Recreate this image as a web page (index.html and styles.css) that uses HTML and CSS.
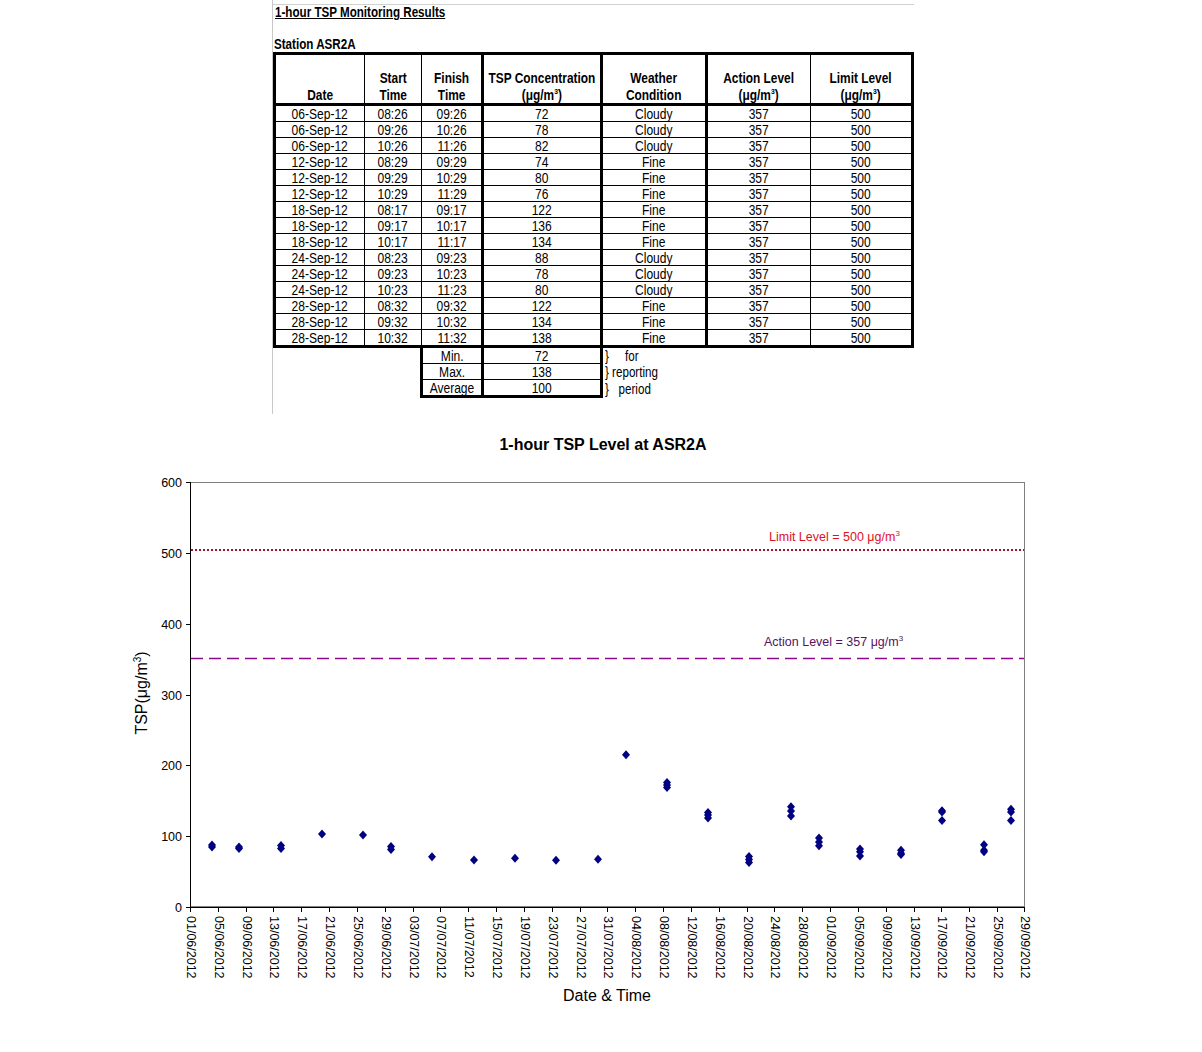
FILE: index.html
```html
<!DOCTYPE html>
<html>
<head>
<meta charset="utf-8">
<link rel="stylesheet" href="styles.css">
</head>
<body>
<div class="sheet">
  <div class="rule"></div>
  <div class="title"><span class="nw">1-hour TSP Monitoring Results</span></div>
  <div class="station"><span class="nw">Station ASR2A</span></div>
  <table class="results">
    <colgroup>
      <col class="c-date"><col class="c-start"><col class="c-finish"><col class="c-tsp"><col class="c-weather"><col class="c-action"><col class="c-limit">
    </colgroup>
    <thead>
      <tr>
        <th><span class="n">Date</span></th>
        <th><span class="n">Start<br>Time</span></th>
        <th><span class="n">Finish<br>Time</span></th>
        <th><span class="n">TSP Concentration<br>(μg/m<sup>3</sup>)</span></th>
        <th><span class="n">Weather<br>Condition</span></th>
        <th><span class="n">Action Level<br>(μg/m<sup>3</sup>)</span></th>
        <th><span class="n">Limit Level<br>(μg/m<sup>3</sup>)</span></th>
      </tr>
    </thead>
    <tbody class="data">
      <tr><td><span class="n">06-Sep-12</span></td><td><span class="n">08:26</span></td><td><span class="n">09:26</span></td><td><span class="n">72</span></td><td><span class="n">Cloudy</span></td><td><span class="n">357</span></td><td><span class="n">500</span></td></tr>
      <tr><td><span class="n">06-Sep-12</span></td><td><span class="n">09:26</span></td><td><span class="n">10:26</span></td><td><span class="n">78</span></td><td><span class="n">Cloudy</span></td><td><span class="n">357</span></td><td><span class="n">500</span></td></tr>
      <tr><td><span class="n">06-Sep-12</span></td><td><span class="n">10:26</span></td><td><span class="n">11:26</span></td><td><span class="n">82</span></td><td><span class="n">Cloudy</span></td><td><span class="n">357</span></td><td><span class="n">500</span></td></tr>
      <tr><td><span class="n">12-Sep-12</span></td><td><span class="n">08:29</span></td><td><span class="n">09:29</span></td><td><span class="n">74</span></td><td><span class="n">Fine</span></td><td><span class="n">357</span></td><td><span class="n">500</span></td></tr>
      <tr><td><span class="n">12-Sep-12</span></td><td><span class="n">09:29</span></td><td><span class="n">10:29</span></td><td><span class="n">80</span></td><td><span class="n">Fine</span></td><td><span class="n">357</span></td><td><span class="n">500</span></td></tr>
      <tr><td><span class="n">12-Sep-12</span></td><td><span class="n">10:29</span></td><td><span class="n">11:29</span></td><td><span class="n">76</span></td><td><span class="n">Fine</span></td><td><span class="n">357</span></td><td><span class="n">500</span></td></tr>
      <tr><td><span class="n">18-Sep-12</span></td><td><span class="n">08:17</span></td><td><span class="n">09:17</span></td><td><span class="n">122</span></td><td><span class="n">Fine</span></td><td><span class="n">357</span></td><td><span class="n">500</span></td></tr>
      <tr><td><span class="n">18-Sep-12</span></td><td><span class="n">09:17</span></td><td><span class="n">10:17</span></td><td><span class="n">136</span></td><td><span class="n">Fine</span></td><td><span class="n">357</span></td><td><span class="n">500</span></td></tr>
      <tr><td><span class="n">18-Sep-12</span></td><td><span class="n">10:17</span></td><td><span class="n">11:17</span></td><td><span class="n">134</span></td><td><span class="n">Fine</span></td><td><span class="n">357</span></td><td><span class="n">500</span></td></tr>
      <tr><td><span class="n">24-Sep-12</span></td><td><span class="n">08:23</span></td><td><span class="n">09:23</span></td><td><span class="n">88</span></td><td><span class="n">Cloudy</span></td><td><span class="n">357</span></td><td><span class="n">500</span></td></tr>
      <tr><td><span class="n">24-Sep-12</span></td><td><span class="n">09:23</span></td><td><span class="n">10:23</span></td><td><span class="n">78</span></td><td><span class="n">Cloudy</span></td><td><span class="n">357</span></td><td><span class="n">500</span></td></tr>
      <tr><td><span class="n">24-Sep-12</span></td><td><span class="n">10:23</span></td><td><span class="n">11:23</span></td><td><span class="n">80</span></td><td><span class="n">Cloudy</span></td><td><span class="n">357</span></td><td><span class="n">500</span></td></tr>
      <tr><td><span class="n">28-Sep-12</span></td><td><span class="n">08:32</span></td><td><span class="n">09:32</span></td><td><span class="n">122</span></td><td><span class="n">Fine</span></td><td><span class="n">357</span></td><td><span class="n">500</span></td></tr>
      <tr><td><span class="n">28-Sep-12</span></td><td><span class="n">09:32</span></td><td><span class="n">10:32</span></td><td><span class="n">134</span></td><td><span class="n">Fine</span></td><td><span class="n">357</span></td><td><span class="n">500</span></td></tr>
      <tr class="last"><td><span class="n">28-Sep-12</span></td><td><span class="n">10:32</span></td><td><span class="n">11:32</span></td><td><span class="n">138</span></td><td><span class="n">Fine</span></td><td><span class="n">357</span></td><td><span class="n">500</span></td></tr>
    </tbody>
    <tbody class="summary">
      <tr><td class="blank" colspan="2"></td><td class="label"><span class="n">Min.</span></td><td class="value"><span class="n">72</span></td><td class="note" colspan="3"><span class="nw">}     for</span></td></tr>
      <tr><td class="blank" colspan="2"></td><td class="label"><span class="n">Max.</span></td><td class="value"><span class="n">138</span></td><td class="note" colspan="3"><span class="nw">} reporting</span></td></tr>
      <tr class="end"><td class="blank" colspan="2"></td><td class="label"><span class="n">Average</span></td><td class="value"><span class="n">100</span></td><td class="note" colspan="3"><span class="nw">}   period</span></td></tr>
    </tbody>
  </table>
</div>
<svg class="chart" width="1202" height="638" viewBox="0 414 1202 638" xmlns="http://www.w3.org/2000/svg">
  <text class="chart-title" x="603" y="450" text-anchor="middle">1-hour TSP Level at ASR2A</text>
  <rect x="190.5" y="482.5" width="834" height="424" fill="none" stroke="#808080" stroke-width="1"/>
  <g class="axis" stroke="#000" stroke-width="1">
    <line x1="190.5" y1="482" x2="190.5" y2="907.5"/>
    <line x1="190" y1="907.5" x2="1025" y2="907.5"/>
    <line x1="186" y1="482.5" x2="190" y2="482.5"/>
    <line x1="186" y1="553.5" x2="190" y2="553.5"/>
    <line x1="186" y1="624.5" x2="190" y2="624.5"/>
    <line x1="186" y1="695.5" x2="190" y2="695.5"/>
    <line x1="186" y1="765.5" x2="190" y2="765.5"/>
    <line x1="186" y1="836.5" x2="190" y2="836.5"/>
    <line x1="186" y1="907.5" x2="190" y2="907.5"/>
  </g>
  <g class="ylabels" text-anchor="end">
    <text x="182" y="487">600</text>
    <text x="182" y="558">500</text>
    <text x="182" y="629">400</text>
    <text x="182" y="700">300</text>
    <text x="182" y="770">200</text>
    <text x="182" y="841">100</text>
    <text x="182" y="912">0</text>
  </g>
  <g class="xticks" stroke="#000" stroke-width="1">
    <line x1="190.5" y1="907" x2="190.5" y2="912"/>
    <line x1="218.5" y1="907" x2="218.5" y2="912"/>
    <line x1="246.5" y1="907" x2="246.5" y2="912"/>
    <line x1="273.5" y1="907" x2="273.5" y2="912"/>
    <line x1="301.5" y1="907" x2="301.5" y2="912"/>
    <line x1="329.5" y1="907" x2="329.5" y2="912"/>
    <line x1="357.5" y1="907" x2="357.5" y2="912"/>
    <line x1="385.5" y1="907" x2="385.5" y2="912"/>
    <line x1="413.5" y1="907" x2="413.5" y2="912"/>
    <line x1="440.5" y1="907" x2="440.5" y2="912"/>
    <line x1="468.5" y1="907" x2="468.5" y2="912"/>
    <line x1="496.5" y1="907" x2="496.5" y2="912"/>
    <line x1="524.5" y1="907" x2="524.5" y2="912"/>
    <line x1="552.5" y1="907" x2="552.5" y2="912"/>
    <line x1="580.5" y1="907" x2="580.5" y2="912"/>
    <line x1="607.5" y1="907" x2="607.5" y2="912"/>
    <line x1="635.5" y1="907" x2="635.5" y2="912"/>
    <line x1="663.5" y1="907" x2="663.5" y2="912"/>
    <line x1="691.5" y1="907" x2="691.5" y2="912"/>
    <line x1="719.5" y1="907" x2="719.5" y2="912"/>
    <line x1="747.5" y1="907" x2="747.5" y2="912"/>
    <line x1="774.5" y1="907" x2="774.5" y2="912"/>
    <line x1="802.5" y1="907" x2="802.5" y2="912"/>
    <line x1="830.5" y1="907" x2="830.5" y2="912"/>
    <line x1="858.5" y1="907" x2="858.5" y2="912"/>
    <line x1="886.5" y1="907" x2="886.5" y2="912"/>
    <line x1="914.5" y1="907" x2="914.5" y2="912"/>
    <line x1="941.5" y1="907" x2="941.5" y2="912"/>
    <line x1="969.5" y1="907" x2="969.5" y2="912"/>
    <line x1="997.5" y1="907" x2="997.5" y2="912"/>
    <line x1="1024.5" y1="907" x2="1024.5" y2="912"/>
  </g>
  <g class="xlabels">
    <text transform="translate(191,916) rotate(90)" dy="0.36em">01/06/2012</text>
    <text transform="translate(219,916) rotate(90)" dy="0.36em">05/06/2012</text>
    <text transform="translate(247,916) rotate(90)" dy="0.36em">09/06/2012</text>
    <text transform="translate(274,916) rotate(90)" dy="0.36em">13/06/2012</text>
    <text transform="translate(302,916) rotate(90)" dy="0.36em">17/06/2012</text>
    <text transform="translate(330,916) rotate(90)" dy="0.36em">21/06/2012</text>
    <text transform="translate(358,916) rotate(90)" dy="0.36em">25/06/2012</text>
    <text transform="translate(386,916) rotate(90)" dy="0.36em">29/06/2012</text>
    <text transform="translate(414,916) rotate(90)" dy="0.36em">03/07/2012</text>
    <text transform="translate(441,916) rotate(90)" dy="0.36em">07/07/2012</text>
    <text transform="translate(469,916) rotate(90)" dy="0.36em">11/07/2012</text>
    <text transform="translate(497,916) rotate(90)" dy="0.36em">15/07/2012</text>
    <text transform="translate(525,916) rotate(90)" dy="0.36em">19/07/2012</text>
    <text transform="translate(553,916) rotate(90)" dy="0.36em">23/07/2012</text>
    <text transform="translate(581,916) rotate(90)" dy="0.36em">27/07/2012</text>
    <text transform="translate(608,916) rotate(90)" dy="0.36em">31/07/2012</text>
    <text transform="translate(636,916) rotate(90)" dy="0.36em">04/08/2012</text>
    <text transform="translate(664,916) rotate(90)" dy="0.36em">08/08/2012</text>
    <text transform="translate(692,916) rotate(90)" dy="0.36em">12/08/2012</text>
    <text transform="translate(720,916) rotate(90)" dy="0.36em">16/08/2012</text>
    <text transform="translate(748,916) rotate(90)" dy="0.36em">20/08/2012</text>
    <text transform="translate(775,916) rotate(90)" dy="0.36em">24/08/2012</text>
    <text transform="translate(803,916) rotate(90)" dy="0.36em">28/08/2012</text>
    <text transform="translate(831,916) rotate(90)" dy="0.36em">01/09/2012</text>
    <text transform="translate(859,916) rotate(90)" dy="0.36em">05/09/2012</text>
    <text transform="translate(887,916) rotate(90)" dy="0.36em">09/09/2012</text>
    <text transform="translate(915,916) rotate(90)" dy="0.36em">13/09/2012</text>
    <text transform="translate(942,916) rotate(90)" dy="0.36em">17/09/2012</text>
    <text transform="translate(970,916) rotate(90)" dy="0.36em">21/09/2012</text>
    <text transform="translate(998,916) rotate(90)" dy="0.36em">25/09/2012</text>
    <text transform="translate(1025,916) rotate(90)" dy="0.36em">29/09/2012</text>
  </g>
  <line x1="191" y1="550" x2="1024" y2="550" stroke="#9c1030" stroke-width="2" stroke-dasharray="2 2"/>
  <text class="limit-label" x="769" y="541">Limit Level = 500 μg/m<tspan class="sup" dy="-5">3</tspan></text>
  <line x1="191" y1="658.5" x2="1024" y2="658.5" stroke="#8a0a8a" stroke-width="1.5" stroke-dasharray="12 6"/>
  <text class="action-label" x="764" y="646">Action Level = 357 μg/m<tspan class="sup" dy="-5">3</tspan></text>
  <g class="points" fill="#000080">
    <path d="M212 840.5 l4 4.5 l-4 4.5 l-4 -4.5 z"/>
    <path d="M212 842.5 l4 4.5 l-4 4.5 l-4 -4.5 z"/>
    <path d="M239 842.5 l4 4.5 l-4 4.5 l-4 -4.5 z"/>
    <path d="M239 844 l4 4.5 l-4 4.5 l-4 -4.5 z"/>
    <path d="M281 841 l4 4.5 l-4 4.5 l-4 -4.5 z"/>
    <path d="M281 844 l4 4.5 l-4 4.5 l-4 -4.5 z"/>
    <path d="M322 829.5 l4 4.5 l-4 4.5 l-4 -4.5 z"/>
    <path d="M363 830.5 l4 4.5 l-4 4.5 l-4 -4.5 z"/>
    <path d="M391 842 l4 4.5 l-4 4.5 l-4 -4.5 z"/>
    <path d="M391 845 l4 4.5 l-4 4.5 l-4 -4.5 z"/>
    <path d="M432 852.2 l4 4.5 l-4 4.5 l-4 -4.5 z"/>
    <path d="M474 855.5 l4 4.5 l-4 4.5 l-4 -4.5 z"/>
    <path d="M515 853.8 l4 4.5 l-4 4.5 l-4 -4.5 z"/>
    <path d="M556 855.8 l4 4.5 l-4 4.5 l-4 -4.5 z"/>
    <path d="M598 854.8 l4 4.5 l-4 4.5 l-4 -4.5 z"/>
    <path d="M626 750.2 l4 4.5 l-4 4.5 l-4 -4.5 z"/>
    <path d="M667 778 l4 4.5 l-4 4.5 l-4 -4.5 z"/>
    <path d="M667 780.5 l4 4.5 l-4 4.5 l-4 -4.5 z"/>
    <path d="M667 783 l4 4.5 l-4 4.5 l-4 -4.5 z"/>
    <path d="M708 808 l4 4.5 l-4 4.5 l-4 -4.5 z"/>
    <path d="M708 810.5 l4 4.5 l-4 4.5 l-4 -4.5 z"/>
    <path d="M708 813.5 l4 4.5 l-4 4.5 l-4 -4.5 z"/>
    <path d="M749 852 l4 4.5 l-4 4.5 l-4 -4.5 z"/>
    <path d="M749 855 l4 4.5 l-4 4.5 l-4 -4.5 z"/>
    <path d="M749 858 l4 4.5 l-4 4.5 l-4 -4.5 z"/>
    <path d="M791 802.2 l4 4.5 l-4 4.5 l-4 -4.5 z"/>
    <path d="M791 806.5 l4 4.5 l-4 4.5 l-4 -4.5 z"/>
    <path d="M791 811.5 l4 4.5 l-4 4.5 l-4 -4.5 z"/>
    <path d="M819 833.5 l4 4.5 l-4 4.5 l-4 -4.5 z"/>
    <path d="M819 837.5 l4 4.5 l-4 4.5 l-4 -4.5 z"/>
    <path d="M819 841.2 l4 4.5 l-4 4.5 l-4 -4.5 z"/>
    <path d="M860 844.5 l4 4.5 l-4 4.5 l-4 -4.5 z"/>
    <path d="M860 847.2 l4 4.5 l-4 4.5 l-4 -4.5 z"/>
    <path d="M860 851.5 l4 4.5 l-4 4.5 l-4 -4.5 z"/>
    <path d="M901 845.8 l4 4.5 l-4 4.5 l-4 -4.5 z"/>
    <path d="M901 848.7 l4 4.5 l-4 4.5 l-4 -4.5 z"/>
    <path d="M901 850.1 l4 4.5 l-4 4.5 l-4 -4.5 z"/>
    <path d="M942 806.2 l4 4.5 l-4 4.5 l-4 -4.5 z"/>
    <path d="M942 807.5 l4 4.5 l-4 4.5 l-4 -4.5 z"/>
    <path d="M942 816.1 l4 4.5 l-4 4.5 l-4 -4.5 z"/>
    <path d="M984 840.2 l4 4.5 l-4 4.5 l-4 -4.5 z"/>
    <path d="M984 845.8 l4 4.5 l-4 4.5 l-4 -4.5 z"/>
    <path d="M984 847.2 l4 4.5 l-4 4.5 l-4 -4.5 z"/>
    <path d="M1011 804.8 l4 4.5 l-4 4.5 l-4 -4.5 z"/>
    <path d="M1011 807.5 l4 4.5 l-4 4.5 l-4 -4.5 z"/>
    <path d="M1011 816.1 l4 4.5 l-4 4.5 l-4 -4.5 z"/>
  </g>
  <text class="axis-title" transform="translate(147,693) rotate(-90)" text-anchor="middle">TSP(μg/m<tspan class="sup-lg" dy="-6">3</tspan><tspan dy="6">)</tspan></text>
  <text class="axis-title" x="607" y="1001" text-anchor="middle">Date &amp; Time</text>
</svg>
</body>
</html>
```

FILE: styles.css
```css
html, body {
  margin: 0;
  padding: 0;
  background: #fff;
  overflow: hidden;
}

body {
  width: 1202px;
  height: 1052px;
}

.sheet {
  margin-left: 272px;
  width: 642px;
  height: 414px;
  box-sizing: border-box;
  border-left: 1px solid #c8c8c8;
  font-family: "Liberation Sans", Arial, sans-serif;
  color: #000;
}

/* narrow (Arial Narrow look) text */
.n {
  display: inline-block;
  vertical-align: top;
  margin: 0 -12px;
  transform: scaleX(0.86);
  white-space: nowrap;
}

.nw {
  display: inline-block;
  vertical-align: top;
  transform: scaleX(0.83);
  transform-origin: left center;
  white-space: pre;
}

.rule {
  height: 4px;
  border-bottom: 1px solid #d0d0d0;
}

.title {
  font-weight: bold;
  font-size: 14px;
  line-height: 15px;
  height: 15px;
  padding-left: 2px;
}

.title .nw {
  text-decoration: underline;
}

.station {
  margin-top: 17px;
  font-weight: bold;
  font-size: 14px;
  line-height: 15px;
  height: 15px;
  padding-left: 1px;
}

.results {
  border-collapse: collapse;
  table-layout: fixed;
  width: 638px;
  font-size: 14px;
}

.c-date { width: 90px; }
.c-start { width: 57px; }
.c-finish { width: 61px; }
.c-tsp { width: 119px; }
.c-weather { width: 105px; }
.c-action { width: 104px; }
.c-limit { width: 102px; }

.results th,
.results td {
  border: 1px solid #000;
  padding: 0;
  text-align: center;
  white-space: nowrap;
}

.results th {
  font-weight: bold;
  font-size: 14px;
  line-height: 17px;
  height: 47px;
  padding-top: 1px;
  vertical-align: bottom;
  border-top: 3px solid #000;
  border-bottom: 3px solid #000;
}

.results th .n {
  vertical-align: bottom;
  transform: scaleX(0.85);
  transform-origin: center bottom;
  translate: 0 1px;
}

.results th sup {
  font-size: 8px;
  line-height: 0;
  vertical-align: 6px;
}

.results td {
  height: 14px;
  line-height: 14px;
  padding-top: 1px;
  vertical-align: middle;
}

.results th:nth-child(1),
.results .data td:nth-child(1) {
  border-left: 3px solid #000;
}

.results th:nth-child(3),
.results th:nth-child(4),
.results th:nth-child(5),
.results th:nth-child(7),
.results .data td:nth-child(3),
.results .data td:nth-child(4),
.results .data td:nth-child(5),
.results .data td:nth-child(7) {
  border-right: 3px solid #000;
}

.results tr.last td {
  border-bottom: 3px solid #000;
}

.results .summary td.blank {
  border: none;
}

.results .summary td.label {
  border-left: 3px solid #000;
  border-right: 3px solid #000;
}

.results .summary td.value {
  border-right: 3px solid #000;
}

.results .summary td.note {
  border: none;
  text-align: left;
  padding-left: 2px;
}

.results .summary tr.end td.label,
.results .summary tr.end td.value {
  border-bottom: 3px solid #000;
}

.chart {
  display: block;
  font-family: "Liberation Sans", Arial, sans-serif;
}

.chart-title {
  font-size: 16px;
  font-weight: bold;
  fill: #000;
}

.ylabels text {
  font-size: 12.5px;
  fill: #000;
}

.xlabels text {
  font-size: 12.5px;
  fill: #000;
}

.limit-label {
  font-size: 12.5px;
  fill: #e0101e;
}

.action-label {
  font-size: 12.5px;
  fill: #5a125e;
}

.sup {
  font-size: 8px;
}

.sup-lg {
  font-size: 10px;
}

.axis-title {
  font-size: 16px;
  fill: #000;
}
```
